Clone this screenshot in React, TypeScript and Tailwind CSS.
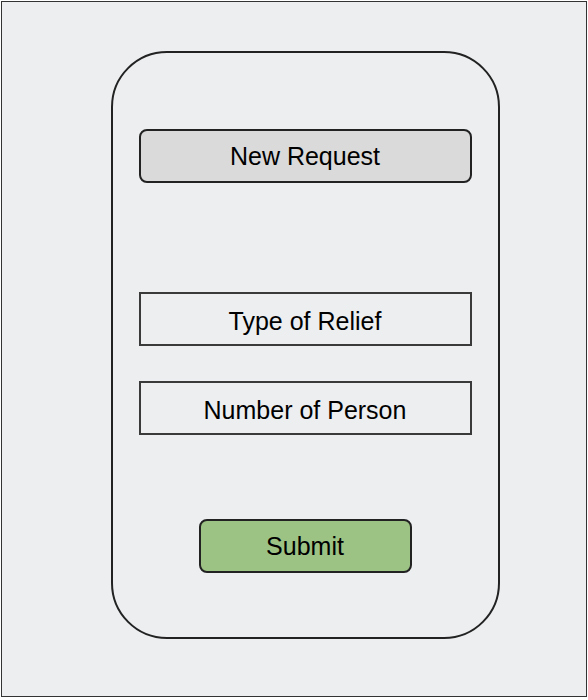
export default function App() {
  return (
    <div className="w-[588px] h-[700px] bg-white pl-px pt-px font-['Liberation_Sans',Arial,sans-serif] text-[25px] text-black">
      <div className="w-[586px] h-[696px] border-[1.5px] border-[#333] bg-[#eceef0] pl-[108.5px] pt-[48.5px]">
        <div className="w-[389px] h-[588px] rounded-[56px] border-2 border-[#222] flex flex-col items-center pt-[76px]">
          <div className="w-[333px] h-[54px] rounded-[8px] border-2 border-[#222] bg-[#dadada] flex items-center justify-center pt-[3px]">
            New Request
          </div>
          <div className="mt-[109px] w-[333px] h-[54px] border-2 border-[#3a3a3a] flex items-center justify-center pt-[6px]">
            Type of Relief
          </div>
          <div className="mt-[35px] w-[333px] h-[54px] border-2 border-[#3a3a3a] flex items-center justify-center pt-[6px]">
            Number of Person
          </div>
          <div className="mt-[84px] w-[213px] h-[54px] rounded-[8px] border-2 border-[#222] bg-[#9dc384] flex items-center justify-center pt-[3px]">
            Submit
          </div>
        </div>
      </div>
    </div>
  )
}
